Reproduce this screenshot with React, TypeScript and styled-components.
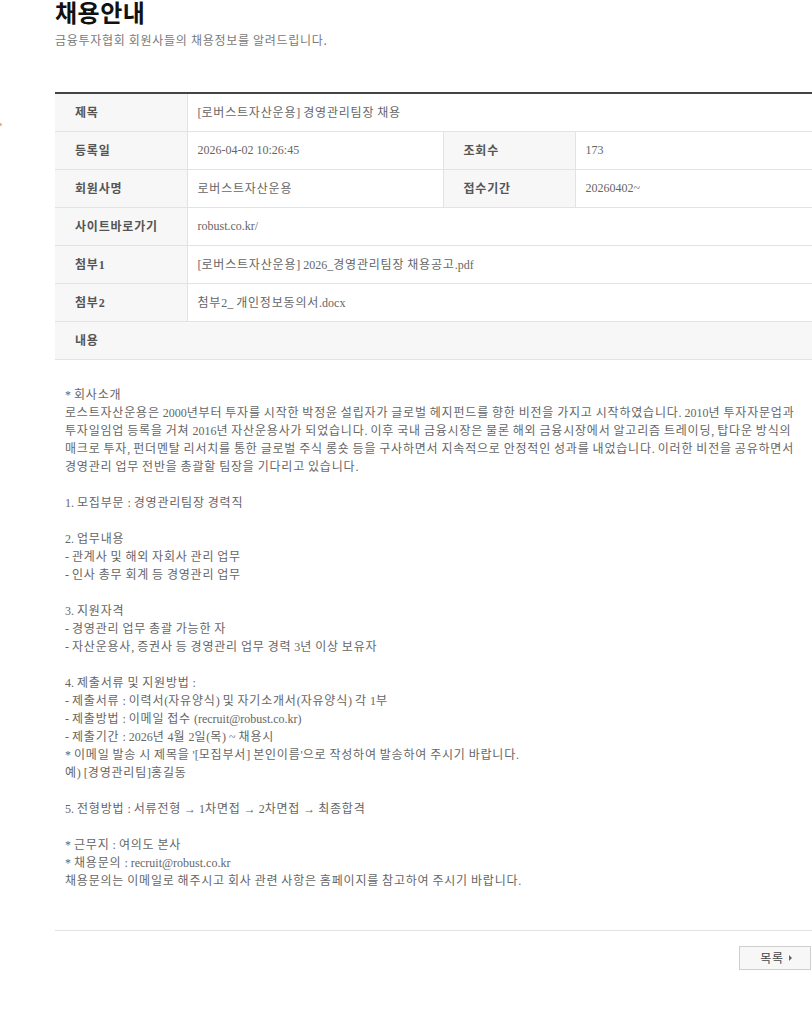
import React, { ReactNode } from 'react';
import styled, { createGlobalStyle } from 'styled-components';

const GlobalStyle = createGlobalStyle`
  html, body {
    margin: 0;
    padding: 0;
    background: #fff;
    overflow: hidden;
  }
  body {
    font-family: "Liberation Serif", "Noto Sans CJK KR", serif;
  }
`;

const Page = styled.div`
  position: relative;
  width: 812px;
  min-height: 1023px;
`;

const SideMark = styled.span`
  position: absolute;
  left: -1px;
  top: 123px;
  width: 3px;
  height: 3px;
  border-radius: 50%;
  background: #f7a88a;
`;

const Container = styled.div`
  margin-left: 55px;
  width: 757px;
`;

const Heading = styled.h2`
  margin: 0;
  font-family: "Noto Sans CJK KR", sans-serif;
  font-size: 24px;
  font-weight: 700;
  line-height: 24px;
  color: #111;
  letter-spacing: 0.5px;
`;

const Lead = styled.p`
  margin: 7px 0 0;
  font-family: "Noto Sans CJK KR", sans-serif;
  font-size: 12px;
  line-height: 18px;
  color: #7a7a7a;
  letter-spacing: 0.7px;
`;

// Hangul in the reference runs wider than Noto's 1em advance
const Hangul = styled.span`
  letter-spacing: 0.8px;
`;

const Table = styled.table`
  margin-top: 43px;
  width: 780px;
  border-collapse: collapse;
  table-layout: fixed;
  border-top: 2px solid #444;
  font-size: 12px;
`;

const Row = styled.tr`
  height: 38px;
  border-bottom: 1px solid #e3e3e3;
`;

const Label = styled.th<{ $divider?: boolean }>`
  text-align: left;
  padding: 0 0 0 20px;
  background: #f7f7f7;
  color: #555;
  font-weight: 700;
  border-right: 1px solid #e3e3e3;
  border-left: ${(p) => (p.$divider ? '1px solid #e3e3e3' : 'none')};
`;

const Value = styled.td`
  padding: 0 10px;
  color: #666;
  font-weight: 400;
  white-space: nowrap;
`;

const ContentHead = styled.th`
  text-align: left;
  padding: 0 0 0 20px;
  background: #f7f7f7;
  color: #555;
  font-weight: 700;
`;

const Body = styled.div`
  padding: 26px 10px 40px;
  font-size: 12px;
  line-height: 18px;
  color: #666;
  white-space: nowrap;
  border-bottom: 1px solid #e3e3e3;
`;

const Footer = styled.div`
  display: flex;
  justify-content: flex-end;
  padding-top: 15px;
`;

const ListButton = styled.button`
  display: flex;
  align-items: center;
  justify-content: center;
  gap: 5px;
  width: 72px;
  height: 24px;
  padding: 0 0 0 2px;
  margin-right: 1px;
  background: #f7f7f7;
  border: 1px solid #cfcfcf;
  font-family: "Noto Sans CJK KR", sans-serif;
  font-size: 12px;
  color: #444;
  letter-spacing: 0.8px;
  cursor: pointer;
`;

const Caret = styled.span`
  width: 0;
  height: 0;
  border-top: 3px solid transparent;
  border-bottom: 3px solid transparent;
  border-left: 3px solid #666;
`;

const HANGUL = /([\u1100-\u11ff\u3130-\u318f\uac00-\ud7af]+)/;

function ko(text: string): ReactNode {
  return text.split(HANGUL).map((part, i) =>
    i % 2 === 1 ? <Hangul key={i}>{part}</Hangul> : part
  );
}

const bodyLines = [
  '* 회사소개',
  '로스트자산운용은 2000년부터 투자를 시작한 박정윤 설립자가 글로벌 헤지펀드를 향한 비전을 가지고 시작하였습니다. 2010년 투자자문업과',
  '투자일임업 등록을 거쳐 2016년 자산운용사가 되었습니다. 이후 국내 금융시장은 물론 해외 금융시장에서 알고리즘 트레이딩, 탑다운 방식의',
  '매크로 투자, 펀더멘탈 리서치를 통한 글로벌 주식 롱숏 등을 구사하면서 지속적으로 안정적인 성과를 내었습니다. 이러한 비전을 공유하면서',
  '경영관리 업무 전반을 총괄할 팀장을 기다리고 있습니다.',
  '',
  '1. 모집부문 : 경영관리팀장 경력직',
  '',
  '2. 업무내용',
  '- 관계사 및 해외 자회사 관리 업무',
  '- 인사 총무 회계 등 경영관리 업무',
  '',
  '3. 지원자격',
  '- 경영관리 업무 총괄 가능한 자',
  '- 자산운용사, 증권사 등 경영관리 업무 경력 3년 이상 보유자',
  '',
  '4. 제출서류 및 지원방법 :',
  '- 제출서류 : 이력서(자유양식) 및 자기소개서(자유양식) 각 1부',
  '- 제출방법 : 이메일 접수 (recruit@robust.co.kr)',
  '- 제출기간 : 2026년 4월 2일(목) ~ 채용시',
  "* 이메일 발송 시 제목을 '[모집부서] 본인이름'으로 작성하여 발송하여 주시기 바랍니다.",
  '예) [경영관리팀]홍길동',
  '',
  '5. 전형방법 : 서류전형 → 1차면접 → 2차면접 → 최종합격',
  '',
  '* 근무지 : 여의도 본사',
  '* 채용문의 : recruit@robust.co.kr',
  '채용문의는 이메일로 해주시고 회사 관련 사항은 홈페이지를 참고하여 주시기 바랍니다.',
];

export default function App() {
  return (
    <Page>
      <GlobalStyle />
      <SideMark />
      <Container>
        <Heading>채용안내</Heading>
        <Lead>금융투자협회 회원사들의 채용정보를 알려드립니다.</Lead>

        <Table>
          <colgroup>
            <col style={{ width: 132 }} />
            <col style={{ width: 256 }} />
            <col style={{ width: 132 }} />
            <col />
          </colgroup>
          <tbody>
            <Row>
              <Label>{ko('제목')}</Label>
              <Value colSpan={3}>{ko('[로버스트자산운용] 경영관리팀장 채용')}</Value>
            </Row>
            <Row>
              <Label>{ko('등록일')}</Label>
              <Value>2026-04-02 10:26:45</Value>
              <Label $divider>{ko('조회수')}</Label>
              <Value>173</Value>
            </Row>
            <Row>
              <Label>{ko('회원사명')}</Label>
              <Value>{ko('로버스트자산운용')}</Value>
              <Label $divider>{ko('접수기간')}</Label>
              <Value>20260402~</Value>
            </Row>
            <Row>
              <Label>{ko('사이트바로가기')}</Label>
              <Value colSpan={3}>robust.co.kr/</Value>
            </Row>
            <Row>
              <Label>{ko('첨부1')}</Label>
              <Value colSpan={3}>{ko('[로버스트자산운용] 2026_경영관리팀장 채용공고.pdf')}</Value>
            </Row>
            <Row>
              <Label>{ko('첨부2')}</Label>
              <Value colSpan={3}>{ko('첨부2_ 개인정보동의서.docx')}</Value>
            </Row>
            <Row>
              <ContentHead colSpan={4}>{ko('내용')}</ContentHead>
            </Row>
          </tbody>
        </Table>

        <Body>
          {bodyLines.map((line, i) => (
            <div key={i}>{line ? ko(line) : '\u00a0'}</div>
          ))}
        </Body>

        <Footer>
          <ListButton type="button">
            목록 <Caret />
          </ListButton>
        </Footer>
      </Container>
    </Page>
  );
}
